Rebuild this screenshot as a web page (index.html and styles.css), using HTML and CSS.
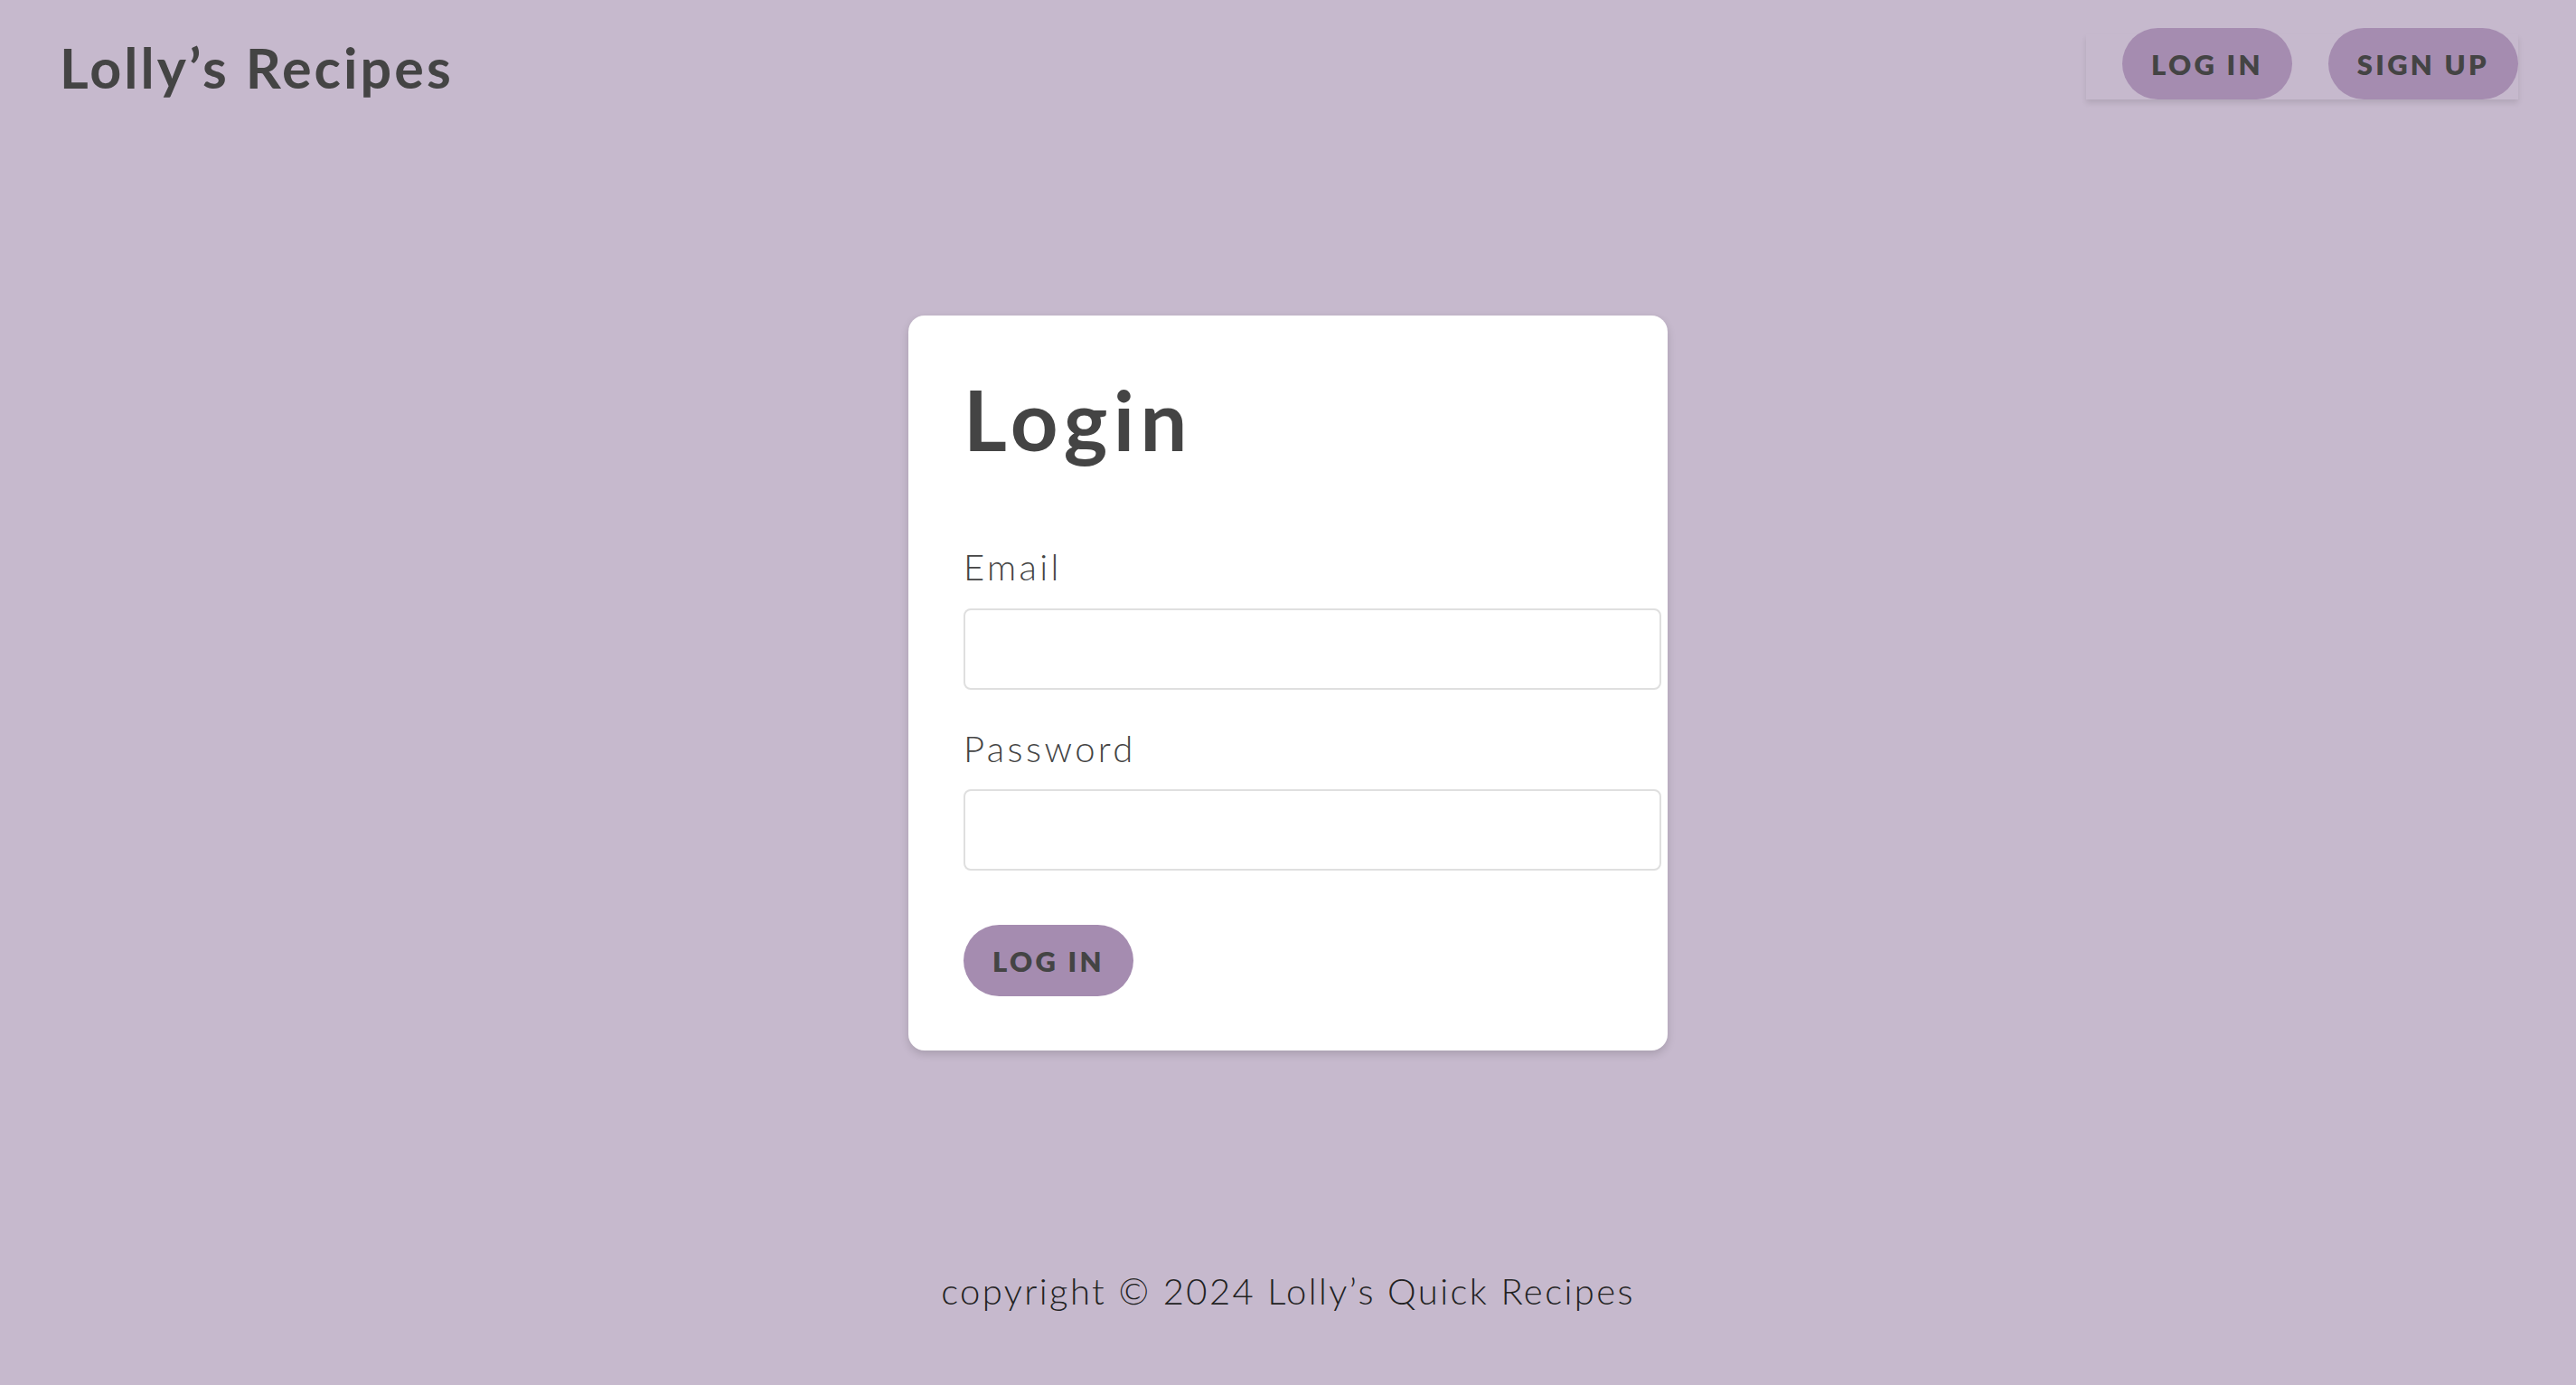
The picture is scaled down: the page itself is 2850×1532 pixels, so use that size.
FILE: index.html
```html
<!DOCTYPE html>
<html lang="en">
<head>
<meta charset="utf-8">
<title>Lolly's Recipes - Login</title>
<link rel="stylesheet" href="styles.css">
</head>
<body>
<header class="site-header">
  <div class="brand">Lolly’s Recipes</div>
  <nav class="nav">
    <a class="pill-btn" href="#">LOG IN</a>
    <a class="pill-btn" href="#">SIGN UP</a>
  </nav>
</header>
<main class="main">
  <section class="card">
    <h1 class="card-title">Login</h1>
    <form class="form">
      <label class="field-label" for="email">Email</label>
      <input class="field-input" id="email" type="email">
      <label class="field-label second" for="password">Password</label>
      <input class="field-input" id="password" type="password">
      <button class="pill-btn submit" type="button">LOG IN</button>
    </form>
  </section>
</main>
<footer class="site-footer">copyright © 2024 Lolly’s Quick Recipes</footer>
</body>
</html>
```
FILE: styles.css
```css
* { box-sizing: border-box; }
html, body { margin: 0; padding: 0; }
body {
  min-height: 100vh;
  display: flex;
  flex-direction: column;
  background: #c6b9cd;
  color: #444;
  font-family: Lato, "Open Sans", sans-serif;
  font-weight: 300;
  letter-spacing: 0.05em;
}
.site-header {
  height: 148px;
  display: flex;
  align-items: center;
  justify-content: space-between;
  padding: 0 64px 0 66px;
}
.brand {
  font-size: 61px;
  line-height: 1;
  font-weight: 700;
  letter-spacing: 0.05em;
  color: #444;
}
.nav {
  display: flex;
  align-items: flex-end;
  gap: 40px;
  height: 72px;
  padding-left: 40px;
  margin-top: 0;
  box-shadow: 0 4px 6px rgba(0, 0, 0, 0.1);
}
.pill-btn {
  display: inline-flex;
  align-items: center;
  justify-content: center;
  height: 79px;
  padding: 0 32px;
  border: none;
  border-radius: 40px;
  background: #a58cb0;
  color: #444;
  font-family: Lato, "Open Sans", sans-serif;
  font-size: 31px;
  font-weight: 800;
  letter-spacing: 0.105em;
  text-decoration: none;
  cursor: pointer;
}
.nav .pill-btn { flex: none; }
.main {
  flex: 1;
  display: flex;
  justify-content: center;
  align-items: flex-start;
  padding-top: 201px;
}
.card {
  width: 840px;
  background: #fff;
  border-radius: 18px;
  padding: 60px 61px 60px 61px;
  box-shadow: 0 4px 10px rgba(0, 0, 0, 0.15);
}
.card-title {
  margin: 0;
  font-size: 92px;
  line-height: 1.2;
  font-weight: 700;
  letter-spacing: 0.07em;
  color: #444;
}
.form {
  display: flex;
  flex-direction: column;
  align-items: flex-start;
  margin-top: 78px;
}
.field-label {
  font-size: 40px;
  line-height: 60px;
  margin-bottom: 16px;
  letter-spacing: 0.085em;
  color: #444;
}
.field-label.second { margin-top: 35px; margin-bottom: 15px; }
.field-input {
  box-sizing: content-box;
  width: 100%;
  height: 86px;
  padding: 0 25px;
  border: 2px solid #dfdfdf;
  border-radius: 8px;
  background: #fff;
  font-size: 36px;
  outline: none;
}
.submit { margin-top: 60px; }
.site-footer {
  text-align: center;
  font-size: 40px;
  line-height: 60px;
  letter-spacing: 0.06em;
  color: #222;
  padding-bottom: 74px;
}
```
